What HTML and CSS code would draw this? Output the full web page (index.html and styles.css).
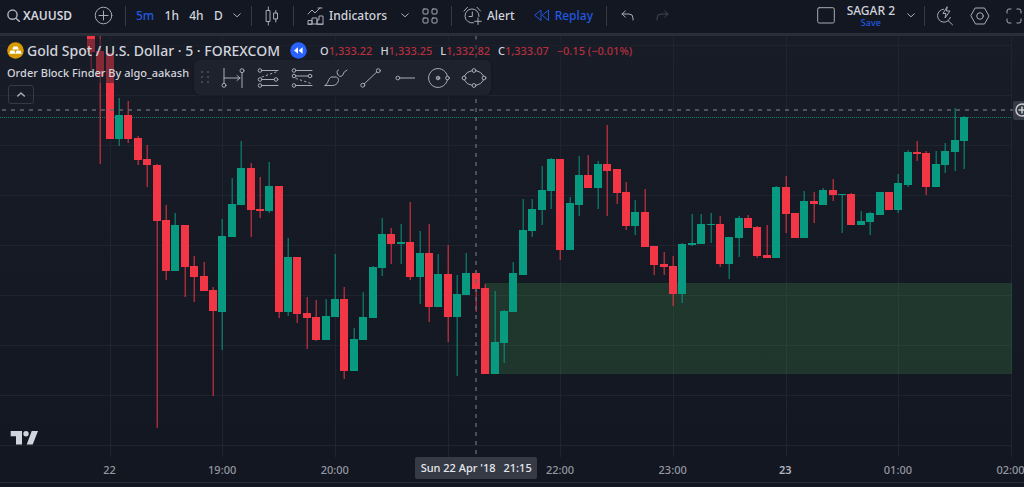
FILE: index.html
```html
<!DOCTYPE html>
<html lang="en">
<head>
<meta charset="utf-8">
<meta name="viewport" content="width=device-width, initial-scale=1">
<title>XAUUSD 5m chart</title>
<link rel="stylesheet" href="styles.css">
</head>
<body>
<header class="toolbar">
  <div class="group group-symbol">
    <button class="btn symbol" type="button">
      <svg class="icon" width="13" height="13" viewBox="0 0 13 13" stroke-width="1.5"><circle cx="5.5" cy="5.7" r="4.6"/><path d="M9 9.2l3.4 3.2"/></svg>
      XAUUSD
    </button>
    <button class="btn" type="button" aria-label="Compare symbol">
      <svg class="icon" width="19" height="19" viewBox="0 0 19 19"><circle cx="9.500" cy="9.500" r="8.300"/><path d="M9.500 5v9M5 9.500h9"/></svg>
    </button>
  </div>
  <div class="group group-interval">
    <button class="btn active" type="button">5m</button>
    <button class="btn" type="button">1h</button>
    <button class="btn" type="button">4h</button>
    <button class="btn" type="button">D</button>
    <button class="btn chevron" type="button" aria-label="More intervals"><svg class="icon" width="8" height="5" viewBox="0 0 8 5"><path d="M.7.800l3.300 3 3.300-3"/></svg></button>
  </div>
  <div class="group group-style">
    <button class="btn" type="button" aria-label="Chart style">
      <svg class="icon" width="14" height="20" viewBox="0 0 14 20"><path d="M1.500 4.500h3.500v11h-3.500zM3.300 1v3.500M3.300 15.500v3.500M9 7h3.500v6h-3.500zM10.800 4.500v2.500M10.800 13v3"/></svg>
    </button>
  </div>
  <div class="group group-indicators">
    <button class="btn" type="button">
      <svg class="icon" width="17" height="18" viewBox="0 0 17 18"><path d="M1 7l4-4 3 3 5-5M11 1h4M1 17v-3.500h4v3.500zM5 17v-6h5v6M10 17v-4h2v-4h4v8zM1 17h15"/></svg>
      Indicators
    </button>
    <button class="btn" type="button" aria-label="Favourite indicators"><svg class="icon" width="8" height="5" viewBox="0 0 8 5"><path d="M.7.800l3.300 3 3.300-3"/></svg></button>
    <button class="btn" type="button" aria-label="Indicator templates">
      <svg class="icon" width="16" height="16" viewBox="0 0 16 16"><rect x="1" y="1" width="5" height="5" rx="1"/><rect x="10" y="1" width="5" height="5" rx="1"/><rect x="1" y="10" width="5" height="5" rx="1"/><rect x="10" y="10" width="5" height="5" rx="1"/></svg>
    </button>
  </div>
  <div class="group group-alert">
    <button class="btn" type="button">
      <svg class="icon" width="19" height="19" viewBox="0 0 19 19"><path d="M16 10.500a7 7 0 1 0-5.500 6.300M9.300 6v4.500h-3.300M1 5l3.500-3.700M17.500 5l-3.500-3.700M15 12v6.500M11.700 15.300h6.600"/></svg>
      Alert
    </button>
    <button class="btn active" type="button">
      <svg class="icon" width="16" height="13" viewBox="0 0 16 13"><path d="M7 1.500v10l-6-5zM14.500 1.500v10l-6-5z"/></svg>
      Replay
    </button>
  </div>
  <div class="group group-history">
    <button class="btn" type="button" aria-label="Undo"><svg class="icon" width="13" height="11" viewBox="0 0 13 11"><path d="M4.300 1l-3.300 3 3.300 3M1 4h7q4 0 4 4v2"/></svg></button>
    <button class="btn" type="button" aria-label="Redo" disabled><svg class="icon" width="13" height="11" viewBox="0 0 13 11"><path d="M8.700 1l3.300 3-3.300 3M12 4h-7q-4 0-4 4v2"/></svg></button>
  </div>
  <div class="group group-layout">
    <button class="btn" type="button" aria-label="Layout"><svg class="icon" width="18" height="17" viewBox="0 0 18 17"><rect x=".7" y=".7" width="16.600" height="15.300" rx="1.500"/></svg></button>
    <button class="btn layout-name" type="button"><span>SAGAR 2</span><span class="save">Save</span></button>
    <button class="btn" type="button" aria-label="Manage layouts"><svg class="icon" width="8" height="5" viewBox="0 0 8 5"><path d="M.7.800l3.300 3 3.300-3"/></svg></button>
  </div>
  <div class="group group-tools">
    <button class="btn" type="button" aria-label="Quick search"><svg class="icon" width="18" height="20" viewBox="0 0 18 20"><path d="M7.500 3.200a6.500 6.500 0 1 0 6.800 8.300M12 14.500l4.500 4.300M11 1l-4 6.500h3l-1 4.500 5-7h-3.200z"/></svg></button>
    <button class="btn" type="button" aria-label="Settings"><svg class="icon" width="20" height="18" viewBox="0 0 20 18"><path d="M5.500 1h9l4.500 8-4.500 8h-9l-4.500-8z"/><circle cx="10" cy="9" r="3.300"/></svg></button>
    <button class="btn" type="button" aria-label="Fullscreen"><svg class="icon" width="16" height="16" viewBox="0 0 16 16"><path d="M1 5v-2q0-2 2-2h2M11 1h2q2 0 2 2v2M15 11v2q0 2-2 2h-2M5 15h-2q-2 0-2-2v-2"/></svg></button>
  </div>
</header>

<main class="chart">
  <svg class="plot" id="plot" viewBox="0 36 1024 421" role="img" aria-label="Gold Spot candlestick chart">
    <g id="grid" class="grid"></g>
    <path class="last-price" d="M0 117.500H1012"/>
    <g id="candles"></g>
    <rect class="zone" x="485.500" y="283.500" width="526" height="90"/>
    <g id="front"></g>
    <path class="cross" d="M476 36V457"/>
    <path class="cross" d="M2 110H1013"/>
    <g class="logo"><path d="M10.700 431h11.300v13.600h-6v-8.300h-5.300zM31.700 431h6.300l-5.300 13.600h-6z"/><circle cx="26" cy="433.700" r="2.700"/></g>
    <g class="price-add"><rect x="1013" y="101" width="18" height="19" rx="2"/><circle cx="1022" cy="110" r="6"/><path d="M1018.500 110h7M1022 106.500v7"/></g>
  </svg>

  <section class="legend">
    <div class="legend-row title-row">
      <svg width="17" height="17" viewBox="0 0 17 17"><circle cx="8.500" cy="8.500" r="8.300" fill="#d69a00"/><path fill="#fff" d="M6.500 4.500h4l1.300 3h-6.600zM3.500 8.500h4l1 3.200h-6.300zM9.500 8.500h4l1.300 3.200h-6.300z"/></svg>
      <h1 class="title">Gold Spot / U.S. Dollar · 5 · FOREXCOM</h1>
      <svg class="replay-badge" width="17" height="17" viewBox="0 0 17 17"><circle cx="8.500" cy="8.500" r="8.300" fill="#2962ff"/><path fill="#fff" d="M8 5.300v6.400l-4-3.200zM12.600 5.300v6.400l-4-3.200z"/></svg>
      <div class="ohlc">
        <span>O<b>1,333.22</b></span><span>H<b>1,333.25</b></span><span>L<b>1,332.82</b></span><span>C<b>1,333.07</b></span><b>−0.15 (−0.01%)</b>
      </div>
    </div>
    <div class="legend-row study">Order Block Finder By algo_aakash</div>
    <button class="collapse" type="button" aria-label="Collapse legend"><svg class="icon" width="8" height="5" viewBox="0 0 8 5" stroke-width="1.500"><path d="M.7 4l3.300-3 3.300 3"/></svg></button>
  </section>

  <div class="drawbar" role="toolbar" aria-label="Drawing tools">
    <svg class="grip" width="8" height="13" viewBox="0 0 8 13"><path d="M0 0h2v2h-2zM6 0h2v2h-2zM0 5h2v2h-2zM6 5h2v2h-2zM0 10h2v2h-2zM6 10h2v2h-2z"/></svg>
    <button class="tool" type="button" aria-label="Date range"><svg class="icon" width="24" height="20" viewBox="0 0 24 20"><path d="M3 0v15M21 5v15M3 10h16M16 7.500l3 2.500-3 2.500"/><circle cx="3" cy="17.300" r="2"/><circle cx="21" cy="2.700" r="2"/></svg></button>
    <button class="tool" type="button" aria-label="Long position"><svg class="icon" width="22" height="20" viewBox="0 0 22 20"><path d="M5 2.500h16M5 11.500h12M5 17.500h16"/><path stroke-dasharray="1.500 3" d="M5 9l14-5"/><circle cx="3" cy="2.500" r="1.800"/><circle cx="3" cy="11.500" r="1.800"/><circle cx="19" cy="11.500" r="1.800"/><circle cx="3" cy="17.500" r="1.800"/></svg></button>
    <button class="tool" type="button" aria-label="Short position"><svg class="icon" width="22" height="20" viewBox="0 0 22 20"><path d="M5 2.500h16M5 8h12M5 17.500h16"/><path stroke-dasharray="1.500 3" d="M5 10.500l15 5"/><circle cx="3" cy="2.500" r="1.800"/><circle cx="3" cy="8" r="1.800"/><circle cx="19" cy="8" r="1.800"/><circle cx="3" cy="17.500" r="1.800"/></svg></button>
    <button class="tool" type="button" aria-label="Brush"><svg class="icon" width="24" height="18" viewBox="0 0 24 18"><path d="M1 16.500c3.500-1 3-8.500 7-8.500h4.500c2 1 2.500 3 1.500 5s-3 3.500-5 3.500zM13.500 5q-1.500-3.500 1-4M13.500 5q2 4 5 1.500q1-4 4.500-5.500"/></svg></button>
    <button class="tool" type="button" aria-label="Trend line"><svg class="icon" width="21" height="20" viewBox="0 0 21 20"><path d="M4.300 15.800l12.500-11.800"/><circle cx="2.800" cy="17.200" r="2"/><circle cx="18.300" cy="2.700" r="2"/></svg></button>
    <button class="tool" type="button" aria-label="Horizontal ray"><svg class="icon" width="20" height="6" viewBox="0 0 20 6"><path d="M4.700 3h15"/><circle cx="2.800" cy="3" r="1.900"/></svg></button>
    <button class="tool" type="button" aria-label="Circle"><svg class="icon" width="22" height="22" viewBox="0 0 22 22"><path d="M19.400 9a9.500 9.500 0 1 0 0 4"/><circle cx="10" cy="11" r="1.800"/><circle cx="10" cy="11" r=".5"/><circle cx="19.500" cy="11" r="1.800"/></svg></button>
    <button class="tool" type="button" aria-label="Ellipse"><svg class="icon" width="26" height="22" viewBox="0 0 26 22"><path d="M3.300 9q2-4.500 7.700-5.400M15 3.600q5.500.900 7.700 5.400M3.300 13q2 4.500 7.700 5.400M15 18.400q5.500-.9 7.700-5.400"/><circle cx="13" cy="3.500" r="1.900"/><circle cx="13" cy="18.500" r="1.900"/><circle cx="3" cy="11" r="1.900"/><circle cx="23" cy="11" r="1.900"/></svg></button>
  </div>
</main>

<footer class="axis">
  <span></span><span>22</span><span>19:00</span><span>20:00</span><span></span><span>22:00</span><span>23:00</span><span class="day">23</span><span>01:00</span><span>02:00</span>
  <div class="cursor-time"><span>Sun 22 Apr '18</span><span>21:15</span></div>
</footer>
<script src="chart.js"></script>
</body>
</html>
```
FILE: styles.css
```css
* { box-sizing: border-box; }

body {
  margin: 0;
  min-height: 100vh;
  background: #131722;
  color: #d1d4dc;
  font-family: "Noto Sans", "Open Sans", sans-serif;
  font-size: 12px;
  overflow-x: hidden;
}

button {
  margin: 0;
  padding: 0;
  border: 0;
  background: none;
  color: inherit;
  font: inherit;
}

.icon {
  display: block;
  flex: none;
  fill: none;
  stroke: #a9acb6;
  stroke-linecap: round;
  stroke-linejoin: round;
}

/* Top toolbar */
.toolbar {
  display: flex;
  height: 36px;
  padding-bottom: 2px;
  border-bottom: 3px solid #2a2e39;
  white-space: nowrap;
}

.group {
  display: flex;
  flex: none;
  align-items: center;
  position: relative;
}

.group + .group::before {
  content: "";
  position: absolute;
  left: 0;
  top: 6px;
  width: 1px;
  height: 20px;
  background: #363a45;
}

.btn {
  display: flex;
  align-items: center;
  gap: 5px;
  font-weight: 500;
}

.symbol { gap: 3px; font-weight: 600; }
.active { color: #2157e0; }
.active .icon { stroke: #2157e0; }
.btn:disabled .icon { stroke: #434651; }

.group-symbol { width: 125px; padding: 0 12px 0 7px; justify-content: space-between; }
.group-interval { width: 126px; padding: 0 10px 0 11px; justify-content: space-between; }
.group-style { width: 42px; justify-content: center; }
.group-indicators { width: 158px; padding: 0 13px 0 14px; justify-content: space-between; }
.group-alert { width: 155px; padding: 0 13px 0 12px; justify-content: space-between; }
.group-history { padding-left: 15px; gap: 22px; }
.toolbar .group-history + .group-layout { margin-left: auto; }
.group-history + .group-layout::before { display: none; }
.group-layout { gap: 12px; padding-right: 9px; }
.group-tools { gap: 16px; padding: 0 2px 0 12px; }

.layout-name {
  flex-direction: column;
  gap: 0;
  line-height: 14px;
}

.save {
  color: #2157e0;
  font-size: 9px;
  line-height: 9px;
}

/* Chart pane */
.chart {
  position: relative;
  background: linear-gradient(#181c27, #131722);
}

.plot { display: block; width: 100%; height: auto; }
.grid { stroke: #20242f; }
.last-price { stroke: #0d7a6f; stroke-dasharray: 1 1; }
.zone { fill: rgba(76, 175, 80, 0.2); stroke: rgba(76, 175, 80, 0.15); }
.up { fill: #089981; }
.down { fill: #f23645; }
.wick { opacity: 0.65; }
.cross { stroke: #62656f; stroke-width: 1.4; stroke-dasharray: 4 5; fill: none; }
.logo { fill: #d1d4dc; }
.price-add { fill: none; stroke: #c8cad0; stroke-width: 1.5; }
.price-add rect { fill: #363a45; stroke: none; }

/* Legend over the chart */
.legend {
  position: absolute;
  left: 5px;
  top: 3px;
  display: flex;
  flex-direction: column;
  align-items: flex-start;
  white-space: nowrap;
}

.legend-row {
  display: flex;
  align-items: center;
  height: 22px;
  padding: 0 2px;
  background: rgba(24, 28, 39, 0.5);
}

.title {
  margin: 0 10px 0 3px;
  font-size: 14px;
  font-weight: 500;
}

.ohlc {
  display: flex;
  gap: 8px;
  margin-left: 13px;
  font-size: 11px;
}

.ohlc b { color: #b52f3d; font-weight: 500; }
.ohlc span { font-weight: 500; }
.study { font-size: 11px; font-weight: 500; }

.collapse {
  display: grid;
  place-items: center;
  width: 26px;
  height: 19px;
  margin: 2px 0 0 3px;
  border: 1px solid #363a45;
  border-radius: 3px;
}

/* Floating drawing tools */
.drawbar {
  position: absolute;
  left: 194px;
  top: 24px;
  display: flex;
  align-items: center;
  width: 297px;
  height: 35px;
  padding-left: 7px;
  border-radius: 6px;
  background: #1e222d;
  box-shadow: 0 1px 3px rgba(0, 0, 0, 0.3);
}

.grip { flex: none; margin-right: 7px; fill: #434651; }
.tool { display: grid; flex: 1; place-items: center; height: 34px; }

/* Time axis */
.axis {
  position: relative;
  display: grid;
  grid-template-columns: 5.2% repeat(9, 11%);
  align-items: center;
  height: 26px;
  border-bottom: 1px solid #2a2e39;
  color: #9598a1;
  font-size: 11px;
  font-weight: 500;
  text-align: center;
  overflow: hidden;
}

.day { font-weight: 600; color: #b2b5be; }

.cursor-time {
  position: absolute;
  left: 46.5%;
  top: 0;
  display: flex;
  justify-content: center;
  gap: 8px;
  width: 122px;
  margin-left: -61px;
  border-radius: 2px;
  background: #363a45;
  color: #e6e8ee;
  font-size: 11px;
  line-height: 22px;
  white-space: nowrap;
}
```
FILE: chart.js
```js
// Each candle: direction, body top, body bottom, high, low
const candles = [
  ["d",36,52,36,70],["d",51,76,36,164],["d",53,139,53,139],["u",115,139,98,146],["d",115,139,101,143],
  ["d",138,160,136,165],["d",159,165,145,187],["d",165,221,164,428],["d",220,271,205,280],["u",225,271,213,271],
  ["d",225,267,225,297],["d",266,277,256,302],["d",276,291,262,291],["d",290,311,287,396],["u",236,312,219,350],
  ["u",204,237,178,237],["u",168,205,141,205],["d",168,210,163,237],["d",209,211,177,218],["u",186,211,162,213],
  ["d",186,312,186,318],["u",257,312,238,316],["d",257,314,257,323],["d",313,318,297,349],["d",317,340,300,341],
  ["u",316,340,299,340],["u",299,317,254,317],["d",299,371,287,379],["u",339,371,328,371],["u",317,340,292,340],
  ["u",267,318,266,318],["u",234,268,218,276],["d",234,244,228,264],["u",242,244,224,264],["d",242,277,202,280],
  ["u",253,277,231,304],["d",253,307,224,322],["u",274,307,254,307],["d",274,317,245,342],["u",294,317,275,376],
  ["u",273,295,253,295],["d",273,289,270,312],["d",288,374,284,374],["u",342,374,291,374],["u",311,343,310,363],
  ["u",273,312,262,312],["u",230,275,199,275],["u",209,231,199,237],["u",190,210,166,225],["u",159,191,158,209],
  ["d",159,250,159,260],["u",203,250,197,250],["u",175,205,156,216],["d",175,188,155,188],["u",164,188,161,209],
  ["d",164,171,125,216],["d",169,193,169,204],["d",192,226,182,230],["u",212,226,200,235],["d",212,247,189,247],
  ["d",246,265,246,275],["d",264,267,252,275],["d",266,294,256,306],["u",244,294,243,303],["u",243,245,214,246],
  ["u",224,244,214,244],["u",224,225,213,243],["d",224,264,216,267],["u",237,264,237,279],["u",218,238,216,257],
  ["d",218,228,215,228],["d",227,256,226,258],["d",255,258,225,258],["u",187,258,186,258],["d",187,214,176,233],
  ["d",213,238,213,238],["u",201,238,191,238],["d",201,204,192,223],["u",190,205,188,205],["d",190,195,179,201],
  ["u",194,195,194,233],["d",194,225,193,225],["u",221,225,211,225],["u",213,222,212,235],["u",192,215,192,215],
  ["d",192,210,192,210],["u",183,210,174,213],["u",152,185,150,187],["d",152,154,141,161],["d",153,187,151,195],
  ["u",164,187,151,187],["u",151,165,143,173],["u",140,152,108,171],["u",117,141,116,169]
];

const NS = "http://www.w3.org/2000/svg";

function add(parent, name, attrs) {
  const node = document.createElementNS(NS, name);
  for (const key in attrs) node.setAttribute(key, attrs[key]);
  parent.appendChild(node);
}

const grid = document.getElementById("grid");
for (let i = 0; i < 9; i++) {
  const x = Math.floor(110 + i * 112.7) + 0.5;
  const y = Math.floor(45 + i * 50.1) + 0.5;
  add(grid, "path", { d: `M${x} 36V457` });
  add(grid, "path", { d: `M0 ${y}H1012` });
}

const back = document.getElementById("candles");
const front = document.getElementById("front");
candles.forEach(([dir, top, bottom, high, low], i) => {
  const layer = i < 42 ? back : front;
  const x = Math.round(109.7 + (i - 2) * 9.388);
  const cls = dir === "u" ? "up" : "down";
  add(layer, "rect", { class: `${cls} wick`, x: x - 0.5, y: high, width: 1.5, height: low - high });
  add(layer, "rect", { class: cls, x: x - 4, y: top, width: 8, height: bottom - top });
});
```
